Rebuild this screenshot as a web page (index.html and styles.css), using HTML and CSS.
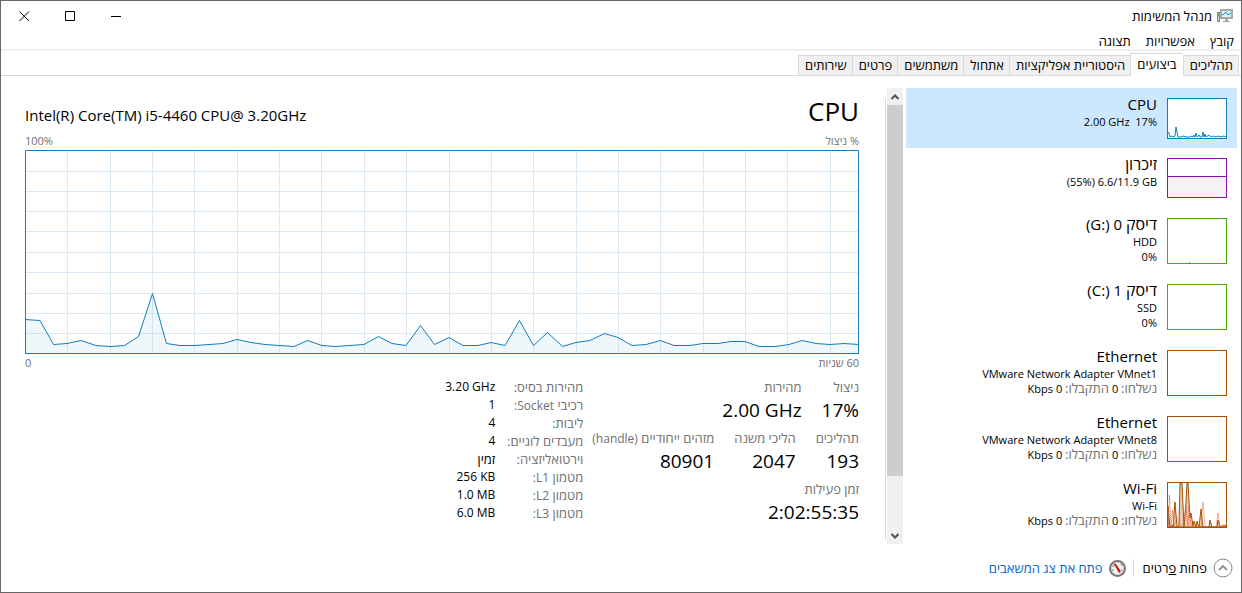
FILE: index.html
```
<!DOCTYPE html>
<html lang="he" dir="rtl">

<head>
    <meta charset="UTF-8">
    <meta name="viewport" content="width=device-width, initial-scale=1.0">
    <title>מנהל המשימות</title>
    <link rel="stylesheet" href="styles.css">
</head>

<body>
    <div class="window">
        <header class="titlebar">
            <svg class="app-icon" width="16" height="16" viewBox="0 0 16 16">
                <rect x="0.5" y="4.5" width="2" height="9" fill="#c9c9c9" stroke="#8b8b8b" />
                <rect x="1" y="6" width="1" height="2" fill="#4fb848" />
                <rect x="4" y="2" width="11" height="8" fill="#d9f1fc" stroke="#a9a9a9" stroke-width="2" />
                <path d="M5 7L7 6L9 4L11 7L14 5" fill="none" stroke="#1e88c7" />
                <path d="M8 11h3v2h2v1h-7v-1h2z" fill="#a5a5a5" />
            </svg>
            <h1 class="title">מנהל המשימות</h1>
            <div class="window-buttons">
                <button type="button" aria-label="מזער">
                    <svg width="11" height="11" viewBox="0 0 11 11"><path d="M0 5.5H10" /></svg>
                </button>
                <button type="button" aria-label="הגדל">
                    <svg width="11" height="11" viewBox="0 0 11 11"><path d="M0.5 0.5H9.5V9.5H0.5Z" /></svg>
                </button>
                <button type="button" aria-label="סגור">
                    <svg width="11" height="11" viewBox="0 0 11 11"><path d="M0.5 0.5L10 10M10 0.5L0.5 10" /></svg>
                </button>
            </div>
        </header>

        <nav class="menu">
            <button type="button">קובץ</button>
            <button type="button">אפשרויות</button>
            <button type="button">תצוגה</button>
        </nav>

        <nav class="tabs" role="tablist">
            <button type="button" role="tab">תהליכים</button>
            <button type="button" role="tab" class="active" aria-selected="true">ביצועים</button>
            <button type="button" role="tab">היסטוריית אפליקציות</button>
            <button type="button" role="tab">אתחול</button>
            <button type="button" role="tab">משתמשים</button>
            <button type="button" role="tab">פרטים</button>
            <button type="button" role="tab">שירותים</button>
        </nav>

        <main class="content">
            <!-- רשימת המשאבים -->
            <ul class="resources">
                <li class="resource selected">
                    <svg class="thumb cpu" width="60" height="41" viewBox="0 0 60 41">
                        <rect x="0.5" y="0.5" width="59" height="40" />
                        <path class="area" d="M1 34L2 35L3 39L5 38L7 39L8 38L9 29L11 39L14 39L16 38L19 39L23 39L24 38L26 39L27 37L28 39L29 35L30 39L32 37L33 39L35 39L36 34L37 39L38 36L39 39L42 37L44 39L46 38L48 39L51 38L54 39L57 38L59 39" />
                    </svg>
                    <div class="info">
                        <h2>CPU</h2>
                        <p dir="ltr">2.00 GHz&nbsp; 17%</p>
                    </div>
                </li>
                <li class="resource">
                    <svg class="thumb memory" width="60" height="40" viewBox="0 0 60 40">
                        <rect x="0.5" y="0.5" width="59" height="39" />
                        <path class="area" d="M0.5 18.5H59.5V39.5H0.5Z" />
                    </svg>
                    <div class="info">
                        <h2><span>זיכרון</span></h2>
                        <p dir="ltr">(55%) 6.6/11.9 GB</p>
                    </div>
                </li>
                <li class="resource">
                    <svg class="thumb disk" width="60" height="46" viewBox="0 0 60 46">
                        <rect x="0.5" y="0.5" width="59" height="45" />
                        <path d="M22 44.5H23" />
                    </svg>
                    <div class="info">
                        <h2><span>דיסק</span> 0 <bdi dir="ltr">(G:)</bdi></h2>
                        <p>HDD</p>
                        <p dir="ltr">0%</p>
                    </div>
                </li>
                <li class="resource">
                    <svg class="thumb disk" width="60" height="46" viewBox="0 0 60 46">
                        <rect x="0.5" y="0.5" width="59" height="45" />
                    </svg>
                    <div class="info">
                        <h2><span>דיסק</span> 1 <bdi dir="ltr">(C:)</bdi></h2>
                        <p>SSD</p>
                        <p dir="ltr">0%</p>
                    </div>
                </li>
                <li class="resource">
                    <svg class="thumb network" width="60" height="46" viewBox="0 0 60 46">
                        <rect x="0.5" y="0.5" width="59" height="45" />
                    </svg>
                    <div class="info">
                        <h2>Ethernet</h2>
                        <p>VMware Network Adapter VMnet1</p>
                        <p><span>נשלחו:</span> 0 <span>התקבלו:</span> 0 Kbps</p>
                    </div>
                </li>
                <li class="resource">
                    <svg class="thumb network" width="60" height="46" viewBox="0 0 60 46">
                        <rect x="0.5" y="0.5" width="59" height="45" />
                    </svg>
                    <div class="info">
                        <h2>Ethernet</h2>
                        <p>VMware Network Adapter VMnet8</p>
                        <p><span>נשלחו:</span> 0 <span>התקבלו:</span> 0 Kbps</p>
                    </div>
                </li>
                <li class="resource">
                    <svg class="thumb network" width="60" height="46" viewBox="0 0 60 46">
                        <path class="area" d="M1 45V24L2 35L3 45L5 43L6 45L8 20L10 45L12 44L13 1H15L17 45L19 20L20 1H21L23 36L24 31L26 44L27 39L29 45L30 39L32 45L34 27L36 45L42 45L43 38L45 45L50 45L51 38L53 45L57 43L59 44V45Z" />
                        <path class="sent" d="M1 45L2.5 13L4 45L5.5 28L7 45L10 34L12 45L17 40L19 24L21 45L22 24L24 45L34 45L36 20L38 45L49 45L51 31L53 45" />
                        <rect class="frame" x="0.5" y="0.5" width="59" height="45" />
                    </svg>
                    <div class="info">
                        <h2>Wi-Fi</h2>
                        <p>Wi-Fi</p>
                        <p><span>נשלחו:</span> 0 <span>התקבלו:</span> 0 Kbps</p>
                    </div>
                </li>
            </ul>

            <div class="scrollbar">
                <button type="button" aria-label="גלול למעלה">
                    <svg width="8" height="6" viewBox="0 0 8 6"><path d="M0.5 5L4 1.5L7.5 5" /></svg>
                </button>
                <div class="track">
                    <div class="thumb-bar"></div>
                </div>
                <button type="button" aria-label="גלול למטה">
                    <svg width="8" height="6" viewBox="0 0 8 6"><path d="M0.5 1L4 4.5L7.5 1" /></svg>
                </button>
            </div>

            <!-- פרטי המעבד -->
            <section class="details">
                <div class="heading">
                    <h2>CPU</h2>
                    <p dir="ltr">Intel(R) Core(TM) i5-4460 CPU@ 3.20GHz</p>
                </div>
                <div class="axis">
                    <span>% ניצול</span>
                    <span dir="ltr">100%</span>
                </div>
                <svg class="chart" viewBox="0 0 834 204" preserveAspectRatio="none">
                    <path class="grid" d="M42.5 0V204M85.5 0V204M127.5 0V204M169.5 0V204M212.5 0V204M254.5 0V204M296.5 0V204M339.5 0V204M381.5 0V204M424.5 0V204M466.5 0V204M508.5 0V204M551.5 0V204M593.5 0V204M635.5 0V204M678.5 0V204M720.5 0V204M762.5 0V204M805.5 0V204M0 21.5H834M0 41.5H834M0 61.5H834M0 81.5H834M0 102.5H834M0 122.5H834M0 143.5H834M0 163.5H834M0 183.5H834" />
                    <path class="usage" d="M0 204V169.5L15 170.5L28.5 194.5L42 193.5L56 190.5L71 195.5L85 196.5L99.5 195.5L113.5 186.5L127.5 143.5L141.5 193.5L155 195.5L170 195.5L198 193.5L212 189.5L226 192.5L240 194.5L269 196.5L282.5 190.5L297 195.5L310 196.5L339 194.5L353.5 186.5L367 193.5L381 195.5L395.5 175.5L409.5 194.5L424 187.5L438 195.5L453 195.5L466 192.5L480 195.5L494.5 170.5L508.5 195.5L522.5 182.5L537.5 196.5L551 192.5L565 190.5L579.5 183.5L593 187.5L607 195.5L621 194.5L635.5 190.5L649 195.5L665 195.5L678 193.5L693 193.5L706 191.5L720 191.5L734 196.5L750 196.5L764 194.5L777 190.5L791 193.5L805 194.5L819 193.5L834 194.5V204Z" />
                    <rect class="frame" x="0.5" y="0.5" width="833" height="203" />
                </svg>
                <div class="axis">
                    <span>60 שניות</span>
                    <span>0</span>
                </div>

                <div class="stats">
                    <div class="counters">
                        <dl class="row">
                            <div><dt>ניצול</dt><dd dir="ltr">17%</dd></div>
                            <div><dt>מהירות</dt><dd dir="ltr">2.00 GHz</dd></div>
                        </dl>
                        <dl class="row">
                            <div><dt>תהליכים</dt><dd>193</dd></div>
                            <div><dt>הליכי משנה</dt><dd>2047</dd></div>
                            <div><dt>מזהים ייחודיים <small>(handle)</small></dt><dd>80901</dd></div>
                        </dl>
                        <dl class="row">
                            <div><dt>זמן פעילות</dt><dd dir="ltr">2:02:55:35</dd></div>
                        </dl>
                    </div>
                    <table class="specs">
                        <tr><th scope="row">מהירות בסיס:</th><td dir="ltr">3.20 GHz</td></tr>
                        <tr><th scope="row">רכיבי <small>Socket:</small></th><td>1</td></tr>
                        <tr><th scope="row">ליבות:</th><td>4</td></tr>
                        <tr><th scope="row">מעבדים לוגיים:</th><td>4</td></tr>
                        <tr><th scope="row">וירטואליזציה:</th><td class="word">זמין</td></tr>
                        <tr><th scope="row">מטמון <small>L1:</small></th><td dir="ltr">256 KB</td></tr>
                        <tr><th scope="row">מטמון <small>L2:</small></th><td dir="ltr">1.0 MB</td></tr>
                        <tr><th scope="row">מטמון <small>L3:</small></th><td dir="ltr">6.0 MB</td></tr>
                    </table>
                </div>
            </section>
        </main>

        <footer class="footer">
            <button type="button" class="fewer">
                <svg width="20" height="20" viewBox="0 0 20 20">
                    <circle cx="10" cy="10" r="9" fill="#fff" stroke="#8a8a8a" />
                    <path d="M6 12L10 8L14 12" fill="none" stroke="#999" stroke-width="2" />
                </svg>
                <span>פחות <u>פ</u>רטים</span>
            </button>
            <a class="monitor" href="#">
                <svg width="17" height="17" viewBox="0 0 17 17">
                    <circle cx="8.5" cy="8.5" r="7.5" fill="#f4f6f4" stroke="#777" stroke-width="2" />
                    <circle cx="8.5" cy="8.5" r="6" fill="none" stroke="#c5cac5" />
                    <path d="M12 4L13 6M13 9L13 11M4 9V11M5 5L4 7" stroke="#888" />
                    <path d="M4.5 3.5L7 4L12 11.5L10 13Z" fill="#d01818" />
                </svg>
                <span>פתח את צג המשאבים</span>
            </a>
        </footer>
    </div>
</body>

</html>
```

FILE: styles.css
```
* {
    box-sizing: border-box;
    margin: 0;
    padding: 0;
}

body {
    font-family: "Open Sans", "Liberation Sans", sans-serif;
    font-size: 13px;
    line-height: 18px;
    color: #000;
    background: #fff;
}

button {
    font: inherit;
    color: inherit;
    background: none;
    border: none;
}

h1,
h2,
th {
    font-weight: normal;
}

small {
    font-size: 12px;
    line-height: 1;
}

.window {
    display: flex;
    flex-direction: column;
    min-height: 100vh;
    border: 1px solid #666;
}

/* שורת הכותרת */
.titlebar {
    display: flex;
    align-items: center;
    gap: 5px;
    height: 30px;
    padding-right: 8px;
}

.title {
    font-size: 13px;
}

.window-buttons {
    display: flex;
    margin-right: auto;
}

.window-buttons button {
    display: flex;
    align-items: center;
    justify-content: center;
    width: 46px;
    height: 28px;
}

.window-buttons path {
    fill: none;
    stroke: #000;
}

.menu {
    display: flex;
    gap: 15px;
    height: 20px;
    padding: 2px 7px 0 0;
    border-bottom: 2px solid #f0f0f0;
}

.menu button {
    line-height: 16px;
}

/* לשוניות */
.tabs {
    display: flex;
    align-items: flex-end;
    height: 25px;
    padding-right: 2px;
    border-bottom: 1px solid #d9d9d9;
}

.tabs button {
    height: 20px;
    padding: 0 5px 1px 6px;
    background: #f0f0f0;
    border: 1px solid #d9d9d9;
    border-bottom: none;
    border-right: none;
    line-height: 18px;
}

.tabs button:first-child {
    border-right: 1px solid #d9d9d9;
}

.tabs .active {
    height: 23px;
    margin-bottom: -1px;
    padding: 0 6px 2px;
    background: #fff;
}

/* תוכן */
.content {
    display: flex;
    flex: 1;
    padding: 12px 4px 0 0;
}

.resources {
    flex: 0 0 331px;
    list-style: none;
}

.resource {
    display: flex;
    gap: 10px;
    padding: 8px 10px 10px;
}

.selected {
    padding-bottom: 9px;
    background: #cce8ff;
}

.thumb {
    flex: none;
    margin-top: 2px;
    fill: #fff;
}

.cpu {
    stroke: #117dbb;
}

.memory {
    stroke: #8b12ae;
}

.memory .area {
    fill: #f4f2f4;
}

.disk {
    stroke: #4da60c;
}

.network {
    stroke: #a74f01;
}

.cpu .area {
    fill: none;
}

.network .area {
    fill: #e9cbb2;
}

.network .frame {
    fill: none;
}

.sent {
    fill: none;
    stroke: #e2683c;
    stroke-dasharray: 1 1;
}

.info h2 {
    height: 18px;
    font-size: 15px;
    line-height: 16px;
}

.info h2 span {
    font-size: 16px;
    line-height: 1;
}

.info p {
    height: 15px;
    font-size: 11px;
    line-height: 15px;
    text-align: right;
}

.info p span {
    font-size: 13px;
    line-height: 1;
    color: #707070;
}

.scrollbar {
    display: flex;
    flex-direction: column;
    width: 16px;
    margin-right: 3px;
    background: #f0f0f0;
}

.scrollbar button {
    display: flex;
    align-items: center;
    justify-content: center;
    height: 17px;
}

.scrollbar path {
    fill: none;
    stroke: #505050;
    stroke-width: 2;
}

.track {
    flex: 1;
}

.thumb-bar {
    height: 88%;
    background: #cdcdcd;
}

.details {
    flex: 1;
    margin: 10px 1px 4px 0;
    padding: 0 26px 0 24px;
    border-right: 1px solid #d9d9d9;
}

.heading {
    display: flex;
    justify-content: space-between;
    align-items: baseline;
    padding-bottom: 8px;
}

.heading h2 {
    font-size: 26px;
    line-height: 26px;
}

.heading p {
    font-size: 15px;
}

.axis {
    display: flex;
    justify-content: space-between;
    font-size: 11px;
    color: #707070;
}

.chart {
    display: block;
    width: 100%;
    height: 204px;
}

.chart path,
.chart rect {
    fill: none;
    vector-effect: non-scaling-stroke;
}

.chart .grid {
    stroke: #d9eaf4;
}

.chart .usage {
    fill: #117dbb10;
    stroke: #117dbb;
}

.chart .frame {
    stroke: #117dbb;
}

.stats {
    display: flex;
    gap: 9px;
    padding-top: 6px;
}

.row {
    display: flex;
    gap: 20px;
    height: 51px;
}

.row dt {
    color: #707070;
}

.row dd {
    font-size: 19px;
    line-height: 28px;
    text-align: right;
}

.specs {
    align-self: flex-start;
    border-collapse: collapse;
}

.specs th {
    min-width: 88px;
    padding-left: 4px;
    color: #707070;
    text-align: right;
}

.specs td {
    font-size: 12px;
    text-align: right;
}

.specs .word {
    font-size: 13px;
}

/* שורה תחתונה */
.footer {
    display: flex;
    align-items: center;
    height: 48px;
    padding-right: 8px;
}

.fewer,
.monitor {
    display: flex;
    align-items: center;
    gap: 6px;
}

.fewer {
    padding-left: 9px;
}

.monitor {
    padding-right: 7px;
    border-right: 1px solid #d9d9d9;
    color: #0066cc;
    text-decoration: none;
}
```
